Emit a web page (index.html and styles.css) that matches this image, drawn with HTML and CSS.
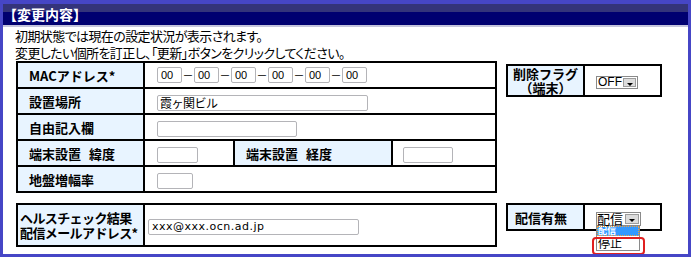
FILE: index.html
```html
<!doctype html>
<html lang="ja">
	<head>
		<meta charset="UTF-8">
		<title>変更内容</title>
		<link rel="stylesheet" href="styles.css">
	</head>
	<body>

		<div class="frame">

			<div class="titlebar">【変更内容】</div>

			<div class="intro">
				初期状態では現在の設定状況が表示されます。<br>
				変更したい個所を訂正し、「更新」ボタンをクリックしてください。
			</div>

			<div class="row">
				<table class="form main">
					<colgroup><col class="c1"><col class="c2"><col class="c3"><col class="c4"></colgroup>
					<tr>
						<th>MACアドレス*</th>
						<td colspan="3">
							<div class="mac">
								<span class="inp w-mac">00</span><span class="dash">－</span>
								<span class="inp w-mac">00</span><span class="dash">－</span>
								<span class="inp w-mac">00</span><span class="dash">－</span>
								<span class="inp w-mac">00</span><span class="dash">－</span>
								<span class="inp w-mac">00</span><span class="dash">－</span>
								<span class="inp w-mac">00</span>
							</div>
						</td>
					</tr>
					<tr>
						<th>設置場所</th>
						<td colspan="3"><span class="inp w-addr jp">霞ヶ関ビル</span></td>
					</tr>
					<tr>
						<th>自由記入欄</th>
						<td colspan="3"><span class="inp w-free"></span></td>
					</tr>
					<tr>
						<th>端末設置<span class="gap">　</span>緯度</th>
						<td><span class="inp w-lat"></span></td>
						<th class="th-mid">端末設置<span class="gap">　</span>経度</th>
						<td class="td-lng"><span class="inp w-lng"></span></td>
					</tr>
					<tr>
						<th>地盤増幅率</th>
						<td colspan="3"><span class="inp w-amp"></span></td>
					</tr>
				</table>

				<table class="form side del">
					<colgroup><col class="s1"><col class="s2"></colgroup>
					<tr>
						<th class="center">削除フラグ<br>（端末）</th>
						<td class="selcell">
							<span class="sel w-off"><span class="sel-txt">OFF</span><span class="sel-btn"></span></span>
						</td>
					</tr>
				</table>
			</div>

			<div class="row row2">
				<table class="form main health">
					<colgroup><col class="c1"><col class="c-rest"></colgroup>
					<tr>
						<th class="th-mail">ヘルスチェック結果<br>配信メールアドレス*</th>
						<td class="td-mail"><span class="inp w-mail">xxx@xxx.ocn.ad.jp</span></td>
					</tr>
				</table>

				<table class="form side">
					<colgroup><col class="s1"><col class="s2"></colgroup>
					<tr>
						<th class="th-haishin">配信有無</th>
						<td class="selcell">
							<span class="sel w-on">
								<span class="sel-txt jp">配信</span><span class="sel-btn"></span>
								<span class="droplist">
									<span class="opt hl">配信</span>
									<span class="opt">停止</span>
								</span>
								<span class="mark"></span>
							</span>
						</td>
					</tr>
				</table>
			</div>

		</div>

	</body>
</html>
```

FILE: styles.css
```css
*{
	box-sizing:border-box;
}

body
{
	margin:0;
	background-color:#fff;
	color:#000;
	font-family:"Noto Sans CJK JP", sans-serif;
	font-size:13px;
}

.frame
{
	width:691px;
	height:257px;
	border:3px solid #4646c6;
	border-top-width:4px;
	overflow:hidden;
}

.titlebar
{
	height:23px;
	background:linear-gradient(#34347a 0, #34347a 8px, #000070 8px, #000070 21px, #c4c4dc 21px, #c4c4dc 23px);
	color:white;
	font-weight:bold;
	font-size:14px;
	line-height:21px;
	padding-left:0;
}

.intro
{
	padding-left:12px;
	line-height:17px;
	height:34px;
	letter-spacing:-0.6px;
	font-feature-settings:"palt";
}

.row
{
	display:flex;
	align-items:flex-start;
	gap:9px;
	padding-left:13px;
}

.row2
{
	margin-top:10px;
}

table.form
{
	border-collapse:separate;
	border-spacing:0;
	table-layout:fixed;
	border-top:2px solid #000;
	border-left:2px solid #000;
}

.form th, .form td
{
	border-right:2px solid #000;
	border-bottom:2px solid #000;
	padding:0;
	vertical-align:middle;
}

.form th
{
	background-color:#e8f4ff;
	font-weight:bold;
	text-align:left;
	padding-left:11px;
	white-space:nowrap;
	letter-spacing:0;
}

.gap
{
	display:inline-block;
	width:8px;
}

.form td
{
	padding-left:12px;
}

.main
{
	width:481px;
}

.main tr
{
	height:26px;
}

col.c1 { width:127px; }
col.c2 { width:90px; }
col.c3 { width:158px; }
col.c4 { width:104px; }
col.c-rest { width:352px; }

.form th.th-mid
{
	padding-left:11px;
}

.form td.td-lng
{
	padding-left:10px;
}

/* inputs */

.inp
{
	display:inline-block;
	height:16px;
	border:1px solid #b4b4b8;
	border-radius:2px;
	background:#fff;
	vertical-align:middle;
	font-family:"Liberation Sans", sans-serif;
	font-size:11px;
	line-height:14px;
	padding-left:3px;
	white-space:nowrap;
	overflow:hidden;
}

.inp.jp
{
	font-family:"Noto Sans CJK JP", sans-serif;
	font-size:12px;
	letter-spacing:-0.5px;
	padding-left:2px;
}

.mac
{
	display:flex;
	align-items:center;
}

.dash
{
	width:12px;
	text-align:center;
	font-size:11px;
	line-height:14px;
}

.w-mac { width:25px; }
.w-addr { width:211px; }
.w-free { width:140px; }
.w-lat { width:41px; }
.w-lng { width:50px; }
.w-amp { width:36px; }

.w-mail
{
	width:211px;
	font-family:"DejaVu Sans", sans-serif;
	letter-spacing:0.5px;
}

/* health row */

.health tr
{
	height:42px;
}

.form th.th-mail
{
	padding-left:2px;
	line-height:15px;
	letter-spacing:-0.6px;
}

.form td.td-mail
{
	padding-left:3px;
}

/* side tables */

.side
{
	width:156px;
}

col.s1 { width:77px; }
col.s2 { width:77px; }

.side tr
{
	height:26px;
}

.del
{
	margin-top:3px;
}

.del tr
{
	height:31px;
}

.form th.center
{
	text-align:center;
	padding-left:0;
	line-height:14px;
}

.form th.th-haishin
{
	padding-left:7px;
}

.form td.selcell
{
	padding-left:11px;
}

/* select box */

.sel
{
	position:relative;
	display:inline-flex;
	vertical-align:middle;
	border:1px solid #8a8a8a;
	background:#fff;
}

.w-off { width:42px; height:13px; }
.w-on { width:45px; height:14px; }

.sel-txt
{
	flex:1;
	font-family:"Liberation Sans", sans-serif;
	font-size:12px;
	line-height:11px;
	padding-left:1px;
}

.sel-txt.jp
{
	font-family:"Noto Sans CJK JP", sans-serif;
	font-size:13px;
	line-height:12px;
	padding-left:0;
}

.sel-btn
{
	position:relative;
	width:14px;
	margin:1px;
	background:#dcdcdc;
	border:1px solid #9c9c9c;
}

.sel-btn::after
{
	content:"";
	position:absolute;
	left:3px;
	top:4px;
	border-left:3px solid transparent;
	border-right:3px solid transparent;
	border-top:3px solid #000;
}

.droplist
{
	position:absolute;
	left:-1px;
	top:13px;
	width:44px;
	background:#fff;
	border:1px solid #8a8a8a;
	border-top:none;
	display:flex;
	flex-direction:column;
}

.opt
{
	height:14px;
	font-size:12px;
	line-height:14px;
	padding-left:1px;
	overflow:hidden;
}

.opt.hl
{
	height:10px;
	font-size:9px;
	line-height:10px;
	background:#3399ff;
	color:#fff;
	font-weight:bold;
	outline:1px dotted #f0a040;
	outline-offset:-1px;
}

.mark
{
	position:absolute;
	left:-5px;
	top:24px;
	width:53px;
	height:18px;
	border:2px solid #e02020;
	border-radius:4px;
}
```
